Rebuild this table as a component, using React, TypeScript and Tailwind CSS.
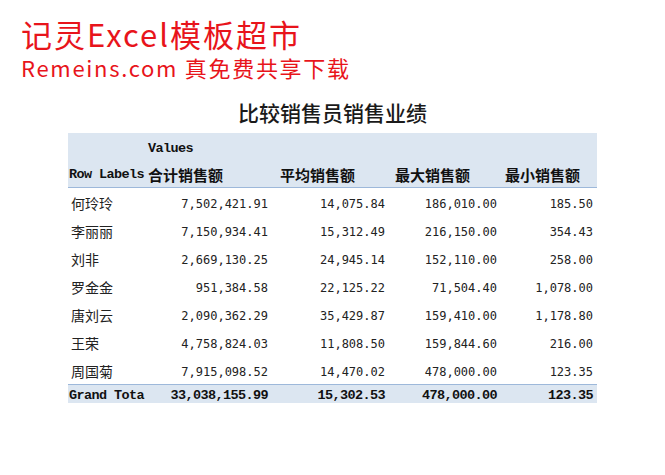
const rows: [string, string, string, string, string][] = [
  ["何玲玲", "7,502,421.91", "14,075.84", "186,010.00", "185.50"],
  ["李丽丽", "7,150,934.41", "15,312.49", "216,150.00", "354.43"],
  ["刘非", "2,669,130.25", "24,945.14", "152,110.00", "258.00"],
  ["罗金金", "951,384.58", "22,125.22", "71,504.40", "1,078.00"],
  ["唐刘云", "2,090,362.29", "35,429.87", "159,410.00", "1,178.80"],
  ["王荣", "4,758,824.03", "11,808.50", "159,844.60", "216.00"],
  ["周国菊", "7,915,098.52", "14,470.02", "478,000.00", "123.35"],
];

const cols = "grid grid-cols-[77px_127px_116px_112px_97px]";
const cjk = "font-['Noto_Sans_CJK_SC',sans-serif]";
const mono = "font-['Liberation_Mono','Noto_Sans_CJK_SC',monospace]";
const num = "font-['DejaVu_Sans_Mono',monospace] text-[12px] text-[#222]";

export default function App() {
  return (
    <div className="w-[665px] h-[475px] bg-white text-[#111]">
      <div className={`pl-[21px] pt-[15px] text-[#e8141b] ${cjk}`}>
        <div className="text-[31px] leading-[38px] tracking-[2px]">记灵Excel模板超市</div>
        <div className="text-[22px] leading-[26px] tracking-[1.7px] mt-[1px]">Remeins.com 真免费共享下载</div>
      </div>

      <h1 className={`mt-[17px] text-center text-[21px] leading-[30px] font-medium text-[#1a1a1a] ${cjk}`}>
        比较销售员销售业绩
      </h1>

      <div className="ml-[68px] mt-[6px] w-[529px]">
        {/* header */}
        <div className="bg-[#dce6f1] border-b border-[#9db8da]">
          <div className={`${cols} h-[27px] items-center`}>
            <div />
            <div className={`pl-[3px] pt-[6px] text-[13.5px] tracking-[-0.6px] font-bold ${mono}`}>Values</div>
          </div>
          <div className={`${cols} h-[27px] items-center pt-[4px]`}>
            <div className={`pl-[1px] text-[13.5px] tracking-[-0.6px] font-bold whitespace-nowrap ${mono}`}>Row Labels</div>
            <div className={`pl-[3px] text-[15px] font-bold ${cjk}`}>合计销售额</div>
            <div className={`pl-[8px] text-[15px] font-bold ${cjk}`}>平均销售额</div>
            <div className={`pl-[7px] text-[15px] font-bold ${cjk}`}>最大销售额</div>
            <div className={`pl-[5px] text-[15px] font-bold ${cjk}`}>最小销售额</div>
          </div>
        </div>

        {/* data */}
        {rows.map((r) => (
          <div key={r[0]} className={`${cols} h-[28px] items-center pt-[3px]`}>
            <div className={`pl-[3px] text-[14px] text-[#222] ${cjk}`}>{r[0]}</div>
            <div className={`pr-[4px] text-right ${num}`}>{r[1]}</div>
            <div className={`pr-[3px] text-right ${num}`}>{r[2]}</div>
            <div className={`pr-[3px] text-right ${num}`}>{r[3]}</div>
            <div className={`pr-[4px] text-right ${num}`}>{r[4]}</div>
          </div>
        ))}

        {/* grand total */}
        <div className={`${cols} h-[19px] items-center pt-[1px] bg-[#dce6f1] border-t border-[#9db8da] font-bold text-[13.5px] tracking-[-0.6px] whitespace-nowrap ${mono}`}>
          <div className="pl-[1px]">Grand Tota</div>
          <div className="pr-[4px] text-right">33,038,155.99</div>
          <div className="pr-[3px] text-right">15,302.53</div>
          <div className="pr-[3px] text-right">478,000.00</div>
          <div className="pr-[4px] text-right">123.35</div>
        </div>
      </div>
    </div>
  );
}
